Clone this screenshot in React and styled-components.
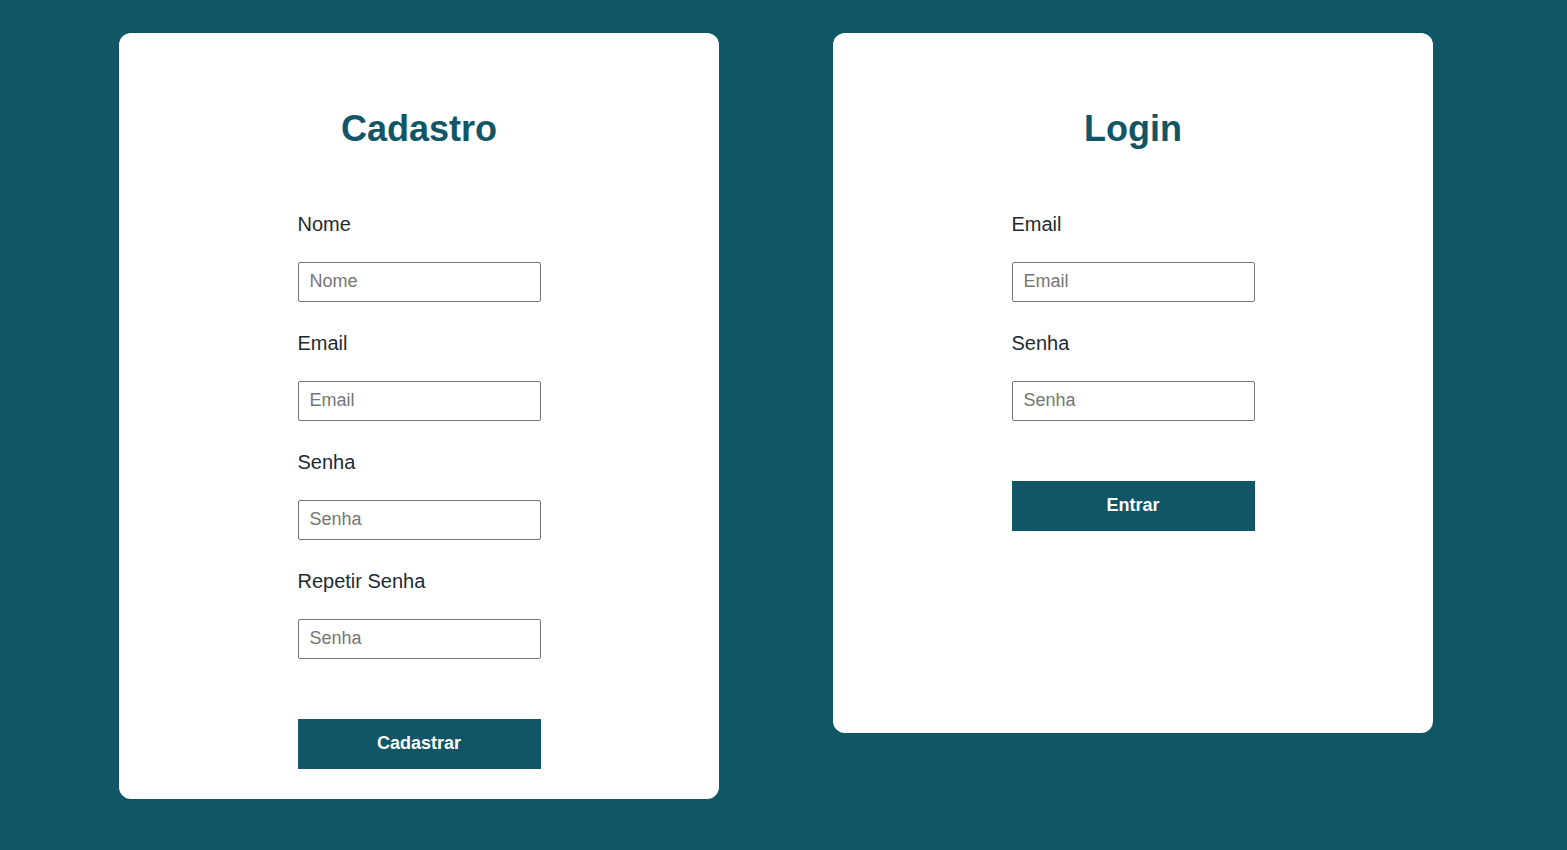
import React from "react";
import styled, { createGlobalStyle } from "styled-components";

const Global = createGlobalStyle`
  html, body { margin: 0; padding: 0; background: #115666; }
  body { font-family: "Liberation Sans", Arial, sans-serif; }
  * { box-sizing: border-box; }
`;

const Page = styled.main`
  min-height: 850px;
  display: flex;
  align-items: flex-start;
  gap: 114px;
  padding: 33px 0 0 119px;
  background: #115666;
`;

const Card = styled.section`
  width: 600px;
  min-height: 700px;
  background: #ffffff;
  border-radius: 12px;
  padding: 75px 0 30px;
  display: flex;
  flex-direction: column;
  align-items: center;
`;

const Title = styled.h1`
  margin: 0 0 62px;
  font-size: 36px;
  line-height: 42px;
  font-weight: 700;
  color: #115666;
`;

const Form = styled.form`
  width: 243px;
  display: flex;
  flex-direction: column;
`;

const Label = styled.label`
  display: block;
  font-size: 20px;
  line-height: 24px;
  color: #1c2b33;
  margin: 0 0 26px;
`;

const Input = styled.input`
  width: 243px;
  height: 40px;
  border: 1px solid #767676;
  border-radius: 2px;
  padding: 0 11px 2px;
  font-family: "Liberation Sans", Arial, sans-serif;
  font-size: 18px;
  color: #222;
  margin: 0 0 29px;
  background: #fff;
  &::placeholder { color: #757575; }
`;

const Button = styled.button`
  margin-top: 31px;
  width: 243px;
  height: 50px;
  border: none;
  padding: 0 0 2px;
  background: #115666;
  color: #ffffff;
  font-family: "Liberation Sans", Arial, sans-serif;
  font-size: 18px;
  font-weight: 700;
  cursor: pointer;
`;

const Field = ({ label, placeholder, type = "text" }) => (
  <>
    <Label>{label}</Label>
    <Input type={type} placeholder={placeholder} />
  </>
);

export default function App() {
  return (
    <>
      <Global />
      <Page>
        <Card>
          <Title>Cadastro</Title>
          <Form onSubmit={(e) => e.preventDefault()}>
            <Field label="Nome" placeholder="Nome" />
            <Field label="Email" placeholder="Email" type="email" />
            <Field label="Senha" placeholder="Senha" type="password" />
            <Field label="Repetir Senha" placeholder="Senha" type="password" />
            <Button type="submit">Cadastrar</Button>
          </Form>
        </Card>
        <Card>
          <Title>Login</Title>
          <Form onSubmit={(e) => e.preventDefault()}>
            <Field label="Email" placeholder="Email" type="email" />
            <Field label="Senha" placeholder="Senha" type="password" />
            <Button type="submit">Entrar</Button>
          </Form>
        </Card>
      </Page>
    </>
  );
}
